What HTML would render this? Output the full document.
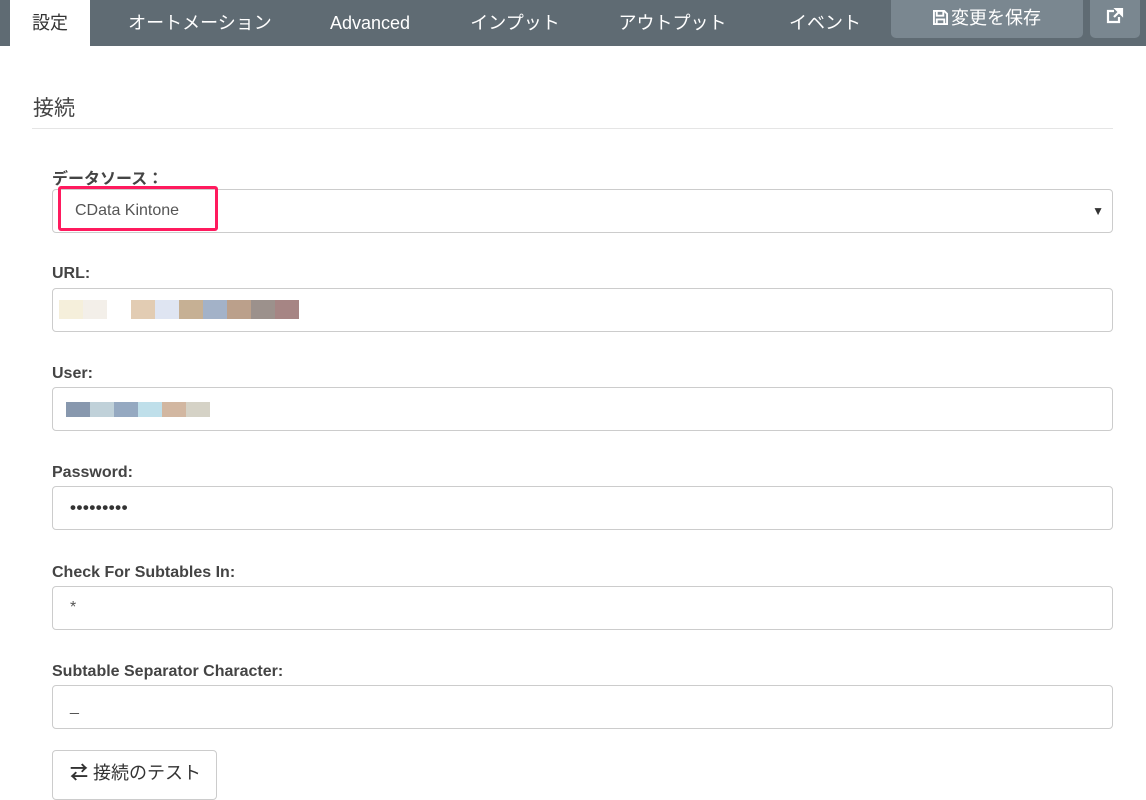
<!DOCTYPE html>
<html><head><meta charset="utf-8"><style>
*{box-sizing:border-box;margin:0;padding:0}
body{width:1146px;height:790px;overflow:hidden;background:#fff;font-family:"Liberation Sans","Noto Sans CJK JP",sans-serif;color:#444;position:relative}
.nav{position:absolute;left:0;top:0;width:1146px;height:46px;background:#5f6b73}
.tab{position:absolute;top:0;height:46px;line-height:46px;color:#fff;font-size:18px;text-align:center}
.tab.act{background:#fff;color:#333;left:10px;width:80px}
.btn{position:absolute;top:0;height:38px;background:#7a8790;border-radius:0 0 5px 5px;color:#fff;font-size:18px;line-height:36px;text-align:center}
h2{position:absolute;left:33px;top:92px;font-size:21px;font-weight:normal;color:#444}
.hr{position:absolute;left:32px;top:128px;width:1081px;height:1px;background:#e5e5e5}
.lbl{position:absolute;left:52px;font-size:16px;font-weight:bold;color:#444}
.inp{position:absolute;left:52px;width:1061px;height:44px;border:1px solid #ccc;border-radius:4px;font-size:16px;color:#555;padding-left:17px;line-height:42px}
.b{position:absolute;height:15px;width:24px}
</style></head><body>
<div class="nav">
<div class="tab act">設定</div>
<div class="tab" style="left:110px;width:180px">オートメーション</div>
<div class="tab" style="left:310px;width:120px">Advanced</div>
<div class="tab" style="left:450px;width:130px">インプット</div>
<div class="tab" style="left:600px;width:145px">アウトプット</div>
<div class="tab" style="left:765px;width:120px">イベント</div>
<div class="btn" style="left:891px;width:192px"><svg width="15" height="15" viewBox="0 0 16 16" style="vertical-align:-1px;margin-right:3px"><path d="M1 1h11l3 3v11H1z M4 1v5h7V1 M4 15v-5h8v5" fill="none" stroke="#fff" stroke-width="2"/></svg>変更を保存</div>
<div class="btn" style="left:1090px;width:50px"><svg width="18" height="16" viewBox="0 0 18 16"><path d="M8 3H2v11h11V9" fill="none" stroke="#fff" stroke-width="2.2"/><path d="M10 1h6v6z M15 2L8 9" fill="#fff" stroke="#fff" stroke-width="2.2"/></svg></div>
</div>
<h2>接続</h2><div class="hr"></div>
<div class="lbl" style="top:165px">データソース：</div>
<div class="inp" style="top:189px;padding-left:22px">CData Kintone<span style="position:absolute;right:8px;top:0;font-size:12px;color:#333">▼</span></div>
<div style="position:absolute;left:58px;top:186px;width:160px;height:45px;border:3.5px solid #ff1a5e;border-radius:3px"></div>
<div class="lbl" style="top:265px">URL:</div>
<div class="inp" style="top:288px"></div>
<div class="b" style="left:59px;top:300px;height:19px;background:#f5efdb"></div><div class="b" style="left:83px;top:300px;height:19px;background:#f3efe9"></div>
<div class="b" style="left:131px;top:300px;height:19px;background:#e2ccb3"></div><div class="b" style="left:155px;top:300px;height:19px;background:#dfe5f2"></div><div class="b" style="left:179px;top:300px;height:19px;background:#c6b094"></div><div class="b" style="left:203px;top:300px;height:19px;background:#a3b2c8"></div><div class="b" style="left:227px;top:300px;height:19px;background:#bba08b"></div><div class="b" style="left:251px;top:300px;height:19px;background:#9c918c"></div><div class="b" style="left:275px;top:300px;height:19px;background:#a68584"></div>
<div class="lbl" style="top:365px">User:</div>
<div class="inp" style="top:387px"></div>
<div class="b" style="left:66px;top:402px;background:#8898ae"></div><div class="b" style="left:90px;top:402px;background:#c0d1d9"></div><div class="b" style="left:114px;top:402px;background:#95a9c1"></div><div class="b" style="left:138px;top:402px;background:#bfdfea"></div><div class="b" style="left:162px;top:402px;background:#d2b7a1"></div><div class="b" style="left:186px;top:402px;background:#d5d2c6"></div>
<div class="lbl" style="top:464px">Password:</div>
<div class="inp" style="top:486px;color:#333;letter-spacing:0.5px;font-size:17px;font-weight:bold">•••••••••</div>
<div class="lbl" style="top:564px">Check For Subtables In:</div>
<div class="inp" style="top:586px">*</div>
<div class="lbl" style="top:663px">Subtable Separator Character:</div>
<div class="inp" style="top:685px">_</div>
<div style="position:absolute;left:52px;top:750px;width:165px;height:50px;border:1px solid #ccc;border-radius:4px;font-size:18px;color:#333;line-height:44px;padding-left:17px"><b>⇄</b> 接続のテスト</div>
</body></html>
